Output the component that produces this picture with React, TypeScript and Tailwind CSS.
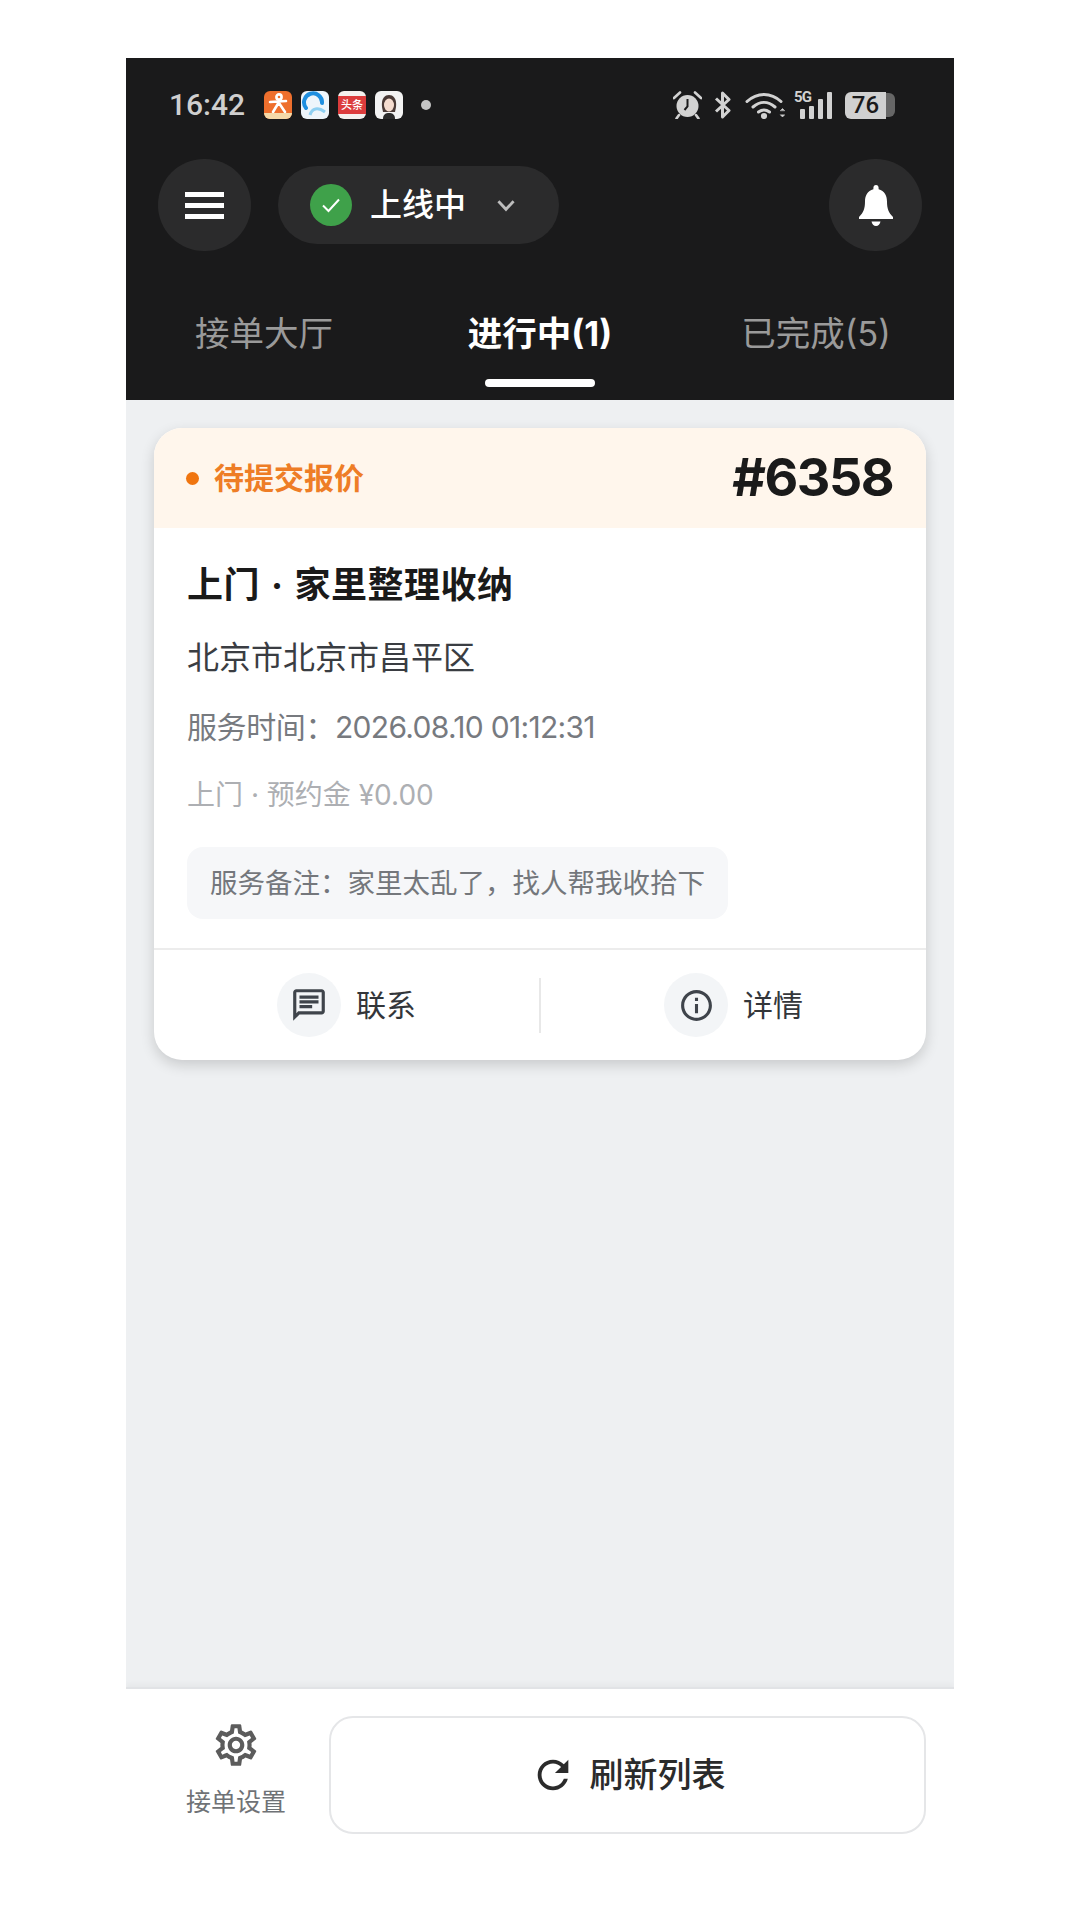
import React from "react";

const chatPath =
  "M20 2H4c-1.1 0-2 .9-2 2v18l4-4h14c1.1 0 2-.9 2-2V4c0-1.1-.9-2-2-2zm0 14H5.17L4 17.17V4h16v12zM6 12h8v2H6zM6 9h12v2H6zM6 6h12v2H6z";
const infoPath =
  "M11 7h2v2h-2zm0 4h2v6h-2zm1-9C6.48 2 2 6.48 2 12s4.48 10 10 10 10-4.48 10-10S17.52 2 12 2zm0 18c-4.41 0-8-3.59-8-8s3.59-8 8-8 8 3.59 8 8-3.59 8-8 8z";
const refreshPath =
  "M17.65 6.35C16.2 4.9 14.21 4 12 4c-4.42 0-7.99 3.58-7.99 8s3.57 8 7.99 8c3.73 0 6.84-2.55 7.73-6h-2.08c-.82 2.33-3.04 4-5.65 4-3.31 0-6-2.69-6-6s2.69-6 6-6c1.66 0 3.14.69 4.22 1.78L13 11h7V4l-2.35 2.35z";
const gearPath =
  "M19.43 12.98c.04-.32.07-.64.07-.98 0-.34-.03-.66-.07-.98l2.11-1.65c.19-.15.24-.42.12-.64l-2-3.46c-.09-.16-.26-.25-.44-.25-.06 0-.12.01-.17.03l-2.49 1c-.52-.4-1.08-.73-1.69-.98l-.38-2.65C14.46 2.18 14.25 2 14 2h-4c-.25 0-.46.18-.49.42l-.38 2.65c-.61.25-1.17.59-1.69.98l-2.49-1c-.06-.02-.12-.03-.18-.03-.17 0-.34.09-.43.25l-2 3.46c-.13.22-.07.49.12.64l2.11 1.65c-.04.32-.07.65-.07.98 0 .33.03.66.07.98l-2.11 1.65c-.19.15-.24.42-.12.64l2 3.46c.09.16.26.25.44.25.06 0 .12-.01.17-.03l2.49-1c.52.4 1.08.73 1.69.98l.38 2.65c.03.24.24.42.49.42h4c.25 0 .46-.18.49-.42l.38-2.65c.61-.25 1.17-.59 1.69-.98l2.49 1c.06.02.12.03.18.03.17 0 .34-.09.43-.25l2-3.46c.12-.22.07-.49-.12-.64l-2.11-1.65zm-1.98-1.71c.04.31.05.52.05.73 0 .21-.02.43-.05.73l-.14 1.13.89.7 1.08.84-.7 1.21-1.27-.51-1.04-.42-.9.68c-.43.32-.84.56-1.25.73l-1.06.43-.16 1.13-.2 1.35h-1.4l-.19-1.35-.16-1.13-1.06-.43c-.43-.18-.83-.41-1.23-.71l-.91-.7-1.06.43-1.27.51-.7-1.21 1.08-.84.89-.7-.14-1.13c-.03-.31-.05-.54-.05-.74s.02-.43.05-.73l.14-1.13-.89-.7-1.08-.84.7-1.21 1.27.51 1.04.42.9-.68c.43-.32.84-.56 1.25-.73l1.06-.43.16-1.13.2-1.35h1.39l.19 1.35.16 1.13 1.06.43c.43.18.83.41 1.23.71l.91.7 1.06-.43 1.27-.51.7 1.21-1.07.85-.89.7.14 1.13zM12 8c-2.21 0-4 1.79-4 4s1.79 4 4 4 4-1.79 4-4-1.79-4-4-4zm0 6c-1.1 0-2-.9-2-2s.9-2 2-2 2 .9 2 2-.9 2-2 2z";

const Icon = ({ d, size, color }: { d: string; size: number; color: string }) => (
  <svg width={size} height={size} viewBox="0 0 24 24" fill={color} className="shrink-0">
    <path d={d} />
  </svg>
);

const StatusBar = () => {
  return (
    <div className="flex h-[94px] items-center pl-[43px] pr-[59px]">
      <span className="w-[77px] text-[30px] font-medium leading-none text-[#cfcfcf] [font-family:Roboto,sans-serif]">
        16:42
      </span>
      <div className="ml-[18px] flex gap-[9px]">
        {/* delivery app */}
        <div className="relative h-[28px] w-[28px] overflow-hidden rounded-[6px] bg-[#ee6f2d]">
          <svg width="28" height="28" viewBox="0 0 28 28" fill="none" stroke="#fff" strokeWidth="2.6" strokeLinecap="round">
            <circle cx="15" cy="6" r="2.6" />
            <path d="M6 11 L22 10 M15 11 L9 21 M15 12 L21 21" />
          </svg>
          <div className="absolute bottom-0 left-0 h-[6px] w-full bg-[#f5d9a8]" />
        </div>
        {/* browser app */}
        <div className="h-[28px] w-[28px] overflow-hidden rounded-[6px] bg-[#eef5fb]">
          <svg width="28" height="28" viewBox="0 0 28 28" fill="none">
            <path d="M5 17a9 9 0 1 1 16 -5" stroke="#1f8fe0" strokeWidth="4" strokeLinecap="round" />
            <path d="M9 24c2-7 8-8 15-3" stroke="#8fd0f2" strokeWidth="3" />
          </svg>
        </div>
        {/* news app */}
        <div className="flex h-[28px] w-[28px] flex-col justify-center rounded-[6px] bg-[#f4f1ee]">
          <div className="flex h-[18px] items-center justify-center bg-[#dc3c3c] text-[11px] font-medium leading-none text-white">
            头条
          </div>
        </div>
        {/* avatar app */}
        <div className="h-[28px] w-[28px] overflow-hidden rounded-[6px] bg-[#f3f3f3]">
          <svg width="28" height="28" viewBox="0 0 28 28">
            <path d="M7 16c-1-9 3-12 7-12s8 3 7 12l-1 5H8z" fill="#4a3a36" />
            <ellipse cx="14" cy="14" rx="5" ry="6.5" fill="#f5dccf" />
            <path d="M8 28c0-5 3-6 6-6s6 1 6 6z" fill="#2b2b2b" />
          </svg>
        </div>
      </div>
      <div className="ml-[18px] h-[10px] w-[10px] rounded-full bg-[#c4c4c4]" />

      <div className="ml-auto flex items-center">
        {/* alarm */}
        <svg width="29" height="28" viewBox="0 0 29 28" className="shrink-0">
          <circle cx="14.5" cy="15" r="11" fill="#d2d2d2" />
          <path d="M14.5 8v7.5l-3 3.5" stroke="#1a1a1b" strokeWidth="2" fill="none" />
          <path d="M1 7 L7 1.5 M28 7 L22 1.5 M6 24 L3.5 27.5 M23 24 L25.5 27.5" stroke="#d2d2d2" strokeWidth="2.6" strokeLinecap="round" />
        </svg>
        {/* bluetooth */}
        <svg width="18" height="28" viewBox="0 0 18 28" fill="none" stroke="#d2d2d2" strokeWidth="3" className="ml-[12px] shrink-0">
          <path d="M2 7.5 L15 19.5 L8.5 26 V2 L15 8.5 L2 20.5" strokeLinejoin="round" />
        </svg>
        {/* wifi */}
        <svg width="40" height="28" viewBox="0 0 40 28" fill="none" stroke="#d2d2d2" strokeWidth="3" strokeLinecap="round" className="ml-[13px] shrink-0">
          <path d="M2 10.5C12 1 26 1 36 10.5" />
          <path d="M8 16c7-6 15-6 22 0" />
          <path d="M13.5 21c4-3 7-3 11 0" />
          <circle cx="19" cy="25" r="1.6" fill="#d2d2d2" />
          <path d="M35.5 19.5l2 -2 2 2zM35.5 24l2 2 2 -2z" fill="#d2d2d2" strokeWidth="0.6" />
        </svg>
        {/* 5G signal */}
        <div className="relative ml-[10px] h-[28px] w-[37px] shrink-0">
          <span className="absolute -left-[1px] -top-[1px] text-[15px] font-bold leading-[15px] tracking-[-0.8px] text-[#d2d2d2] [font-family:Roboto,sans-serif]">
            5G
          </span>
          <div className="absolute bottom-0 right-0 flex items-end gap-[4px]">
            <div className="h-[10px] w-[5px] rounded-[1px] bg-[#d2d2d2]" />
            <div className="h-[13px] w-[5px] rounded-[1px] bg-[#d2d2d2]" />
            <div className="h-[20px] w-[5px] rounded-[1px] bg-[#d2d2d2]" />
            <div className="h-[27px] w-[5px] rounded-[1px] bg-[#d2d2d2]" />
          </div>
        </div>
        {/* battery */}
        <div className="ml-[13px] flex h-[27px] w-[50px] shrink-0 items-center">
          <div className="flex h-full w-[41px] items-center justify-center rounded-l-[6px] bg-[#d0d0d0] text-[24px] font-medium leading-none text-[#1a1a1b] [font-family:Roboto,sans-serif]">
            76
          </div>
          <div className="h-[24px] w-[9px] rounded-r-[6px] bg-[#666]" />
        </div>
      </div>
    </div>
  );
};

const Header = () => {
  return (
    <div className="flex h-[342px] shrink-0 flex-col bg-[#1a1a1b]">
      <StatusBar />
      <div className="mt-[7px] flex items-center px-[32px]">
        <div className="flex h-[92px] w-[93px] flex-col items-center justify-center gap-[6px] rounded-full bg-[#2b2b2c]">
          <div className="h-[5px] w-[39px] bg-white" />
          <div className="h-[5px] w-[39px] bg-white" />
          <div className="h-[5px] w-[39px] bg-white" />
        </div>
        <div className="ml-[27px] flex h-[78px] w-[281px] items-center rounded-full bg-[#2b2b2c] pl-[32px]">
          <div className="flex h-[42px] w-[42px] items-center justify-center rounded-full bg-[#3fa14a]">
            <svg width="24" height="24" viewBox="0 0 24 24" fill="none" stroke="#fff" strokeWidth="2">
              <path d="M4 12.5 L9.5 18 L20 6.5" />
            </svg>
          </div>
          <span className="ml-[18px] text-[32px] font-medium leading-none text-white">上线中</span>
          <svg width="26" height="26" viewBox="0 0 24 24" fill="none" stroke="#bdbdbd" strokeWidth="2.6" className="ml-[27px]">
            <path d="M5 8.5 L12 16 L19 8.5" />
          </svg>
        </div>
        <div className="ml-auto flex h-[92px] w-[93px] items-center justify-center rounded-full bg-[#2b2b2c]">
          {/* bell with flared base */}
          <svg width="34" height="41" viewBox="0 0 34 41" fill="#ffffff" className="shrink-0">
            <path d="M17 0c-1.6 0-2.6 1.2-2.6 2.8v1.4C8.5 5.8 6 10.5 6 16.5c0 7-1.5 11-6 15.5v2h34v-2c-4.5-4.5-6-8.5-6-15.5 0-6-2.5-10.7-8.4-12.3V2.8C19.6 1.2 18.6 0 17 0z" />
            <path d="M12.5 36.5h9c-.4 2.6-2.2 4.5-4.5 4.5s-4.1-1.9-4.5-4.5z" />
          </svg>
        </div>
      </div>
      <div className="grid grid-cols-3">
        <div className="pt-[57px] text-center text-[34.5px] leading-[52px] text-[#9a9a9a]">接单大厅</div>
        <div className="flex flex-col items-center pt-[57px]">
          <span className="text-[34.5px] font-bold leading-[52px] text-white">进行中(1)</span>
          <div className="mt-[19px] h-[8px] w-[110px] rounded-full bg-white" />
        </div>
        <div className="pt-[57px] text-center text-[34.5px] leading-[52px] text-[#9a9a9a]">已完成(5)</div>
      </div>
    </div>
  );
};

const OrderCard = () => {
  return (
    <div className="overflow-hidden rounded-[28px] bg-white shadow-[0_5px_14px_rgba(0,0,0,0.16)]">
      <div className="flex h-[100px] items-center justify-between bg-[#fff6ec] pl-[32px] pr-[33px]">
        <div className="flex items-center">
          <div className="h-[13px] w-[13px] rounded-full bg-[#f0750f]" />
          <span className="ml-[15px] text-[30px] font-bold leading-none text-[#ee7d26]">待提交报价</span>
        </div>
        <span className="text-[52px] font-bold leading-none tracking-[-1.5px] text-[#1a1a1a]">#6358</span>
      </div>
      <div className="px-[33px] pb-[29px] pt-[34px]">
        <div className="text-[36px] font-bold leading-[46px] tracking-[0.5px] [word-spacing:2px] text-[#1a1a1a]">上门 · 家里整理收纳</div>
        <div className="mt-[28px] text-[32px] leading-[44px] text-[#3a3d42]">北京市北京市昌平区</div>
        <div className="mt-[26px] text-[30px] leading-[42px] text-[#777a7f]">
          <span className="tracking-[-0.4px]">服务时间：</span>
          <span className="tracking-[-0.7px]">2026.08.10 01:12:31</span>
        </div>
        <div className="mt-[27px] text-[28px] leading-[40px] text-[#adafb3]">上门 · 预约金 ¥0.00</div>
        <div className="mt-[32px] w-fit rounded-[16px] bg-[#f6f7f9] px-[23px] text-[27.5px] leading-[72px] text-[#74777c]">
          服务备注：家里太乱了，找人帮我收拾下
        </div>
      </div>
      <div className="flex h-[112px] items-center border-t-2 border-[#ececec]">
        <div className="flex flex-1 items-center justify-center gap-[15px]">
          <div className="flex h-[64px] w-[64px] items-center justify-center rounded-full bg-[#f3f5f7]">
            <Icon d={chatPath} size={38} color="#3f444b" />
          </div>
          <span className="text-[30px] leading-none text-[#33363a]">联系</span>
        </div>
        <div className="h-[55px] w-[2px] bg-[#e8e8e8]" />
        <div className="flex flex-1 items-center justify-center gap-[15px]">
          <div className="flex h-[64px] w-[64px] items-center justify-center rounded-full bg-[#f3f5f7]">
            <Icon d={infoPath} size={37} color="#3f444b" />
          </div>
          <span className="text-[30px] leading-none text-[#33363a]">详情</span>
        </div>
      </div>
    </div>
  );
};

const BottomBar = () => {
  return (
    <div className="flex h-[233px] shrink-0 border-t-2 border-[#e1e3e6] bg-white pl-[28px] pr-[28px] shadow-[0_-3px_6px_rgba(0,0,0,0.04)]">
      <div className="flex w-[164px] flex-col items-center pt-[31px]">
        <Icon d={gearPath} size={50} color="#5c5c5c" />
        <span className="mt-[15px] text-[25px] leading-[34px] text-[#6f7276]">接单设置</span>
      </div>
      <div className="ml-[11px] mt-[27px] flex h-[118px] flex-1 items-center justify-center gap-[14px] rounded-[24px] border-2 border-[#e5e6e8]">
        <Icon d={refreshPath} size={46} color="#2b2b2b" />
        <span className="text-[34px] font-medium leading-none text-[#2b2b2b]">刷新列表</span>
      </div>
    </div>
  );
};

export default function App() {
  return (
    <div
      lang="zh-CN"
      className="flex h-[1920px] w-[1080px] justify-center bg-white pt-[58px] [font-family:Inter,'Noto_Sans_CJK_SC',sans-serif]"
    >
      <div className="flex w-[828px] flex-col overflow-hidden">
        <Header />
        <div className="flex-1 bg-[#eef0f2] px-[28px] pt-[28px]">
          <OrderCard />
        </div>
        <BottomBar />
      </div>
    </div>
  );
}
